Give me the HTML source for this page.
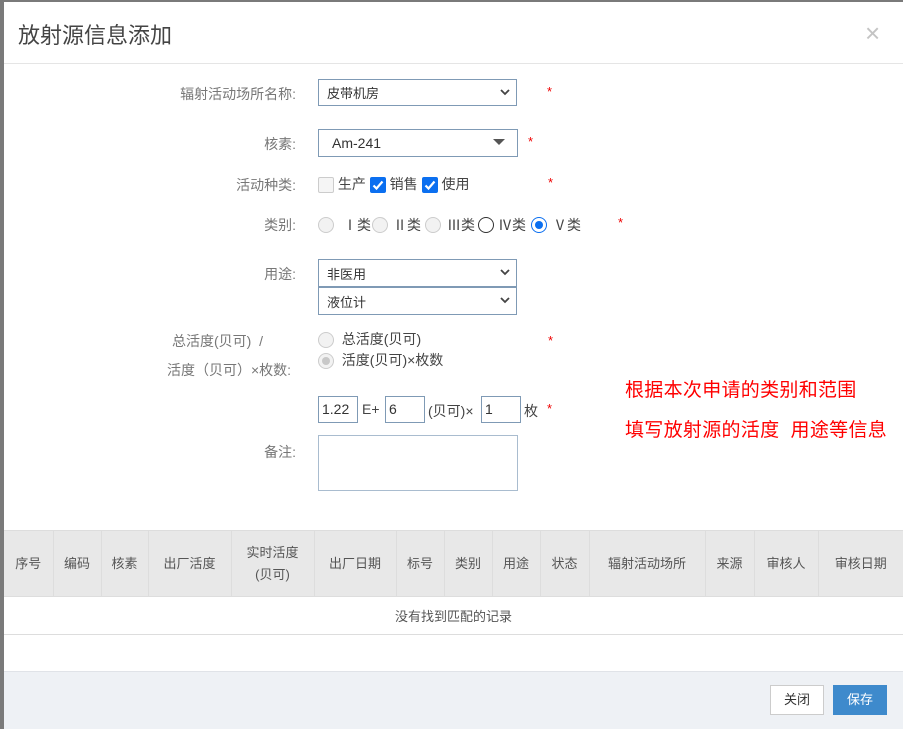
<!DOCTYPE html>
<html><head><meta charset="utf-8">
<style>
*{box-sizing:border-box;margin:0;padding:0}
body{width:903px;height:729px;background:#7a7a7a;font-family:"Liberation Sans","Noto Sans CJK SC",sans-serif;font-size:14px;color:#555;position:relative;overflow:hidden}
.modal{position:absolute;left:4px;top:2px;width:899px;height:727px;background:#fff}
.a{position:absolute;white-space:nowrap}
.lbl{position:absolute;text-align:right;width:200px;color:#777;font-size:14px}
.sel{position:absolute;border:1px solid #7f9ab5;background:#fff;font-size:13px;color:#333;padding-left:8px;display:flex;align-items:center}
.sel svg{position:absolute;right:6px;top:50%;margin-top:-4px}
.star{position:absolute;color:#e00;font-size:13px}
.cb{display:inline-block;width:16px;height:16px;border-radius:2px;vertical-align:middle;position:relative}
.rd{display:inline-block;width:16px;height:16px;border-radius:50%;border:1px solid #ccc;background:#f2f2f2;vertical-align:middle;position:relative}
.rda{position:absolute;width:16px;height:16px;border-radius:50%;border:1px solid #ccc;background:#f2f2f2;top:215px}
.rl{position:absolute;top:213px;color:#444}
.inp{position:absolute;border:1px solid #7f9ab5;height:27px;font-size:14px;color:#333;padding-left:3px;line-height:25px}
table{position:absolute;left:0;top:528px;width:899px;border-collapse:collapse;font-size:13px;color:#555}
th{background:#e8e8e8;font-weight:normal;border-left:1px solid #ddd;height:66px;line-height:22px;border-top:1px solid #ddd;border-bottom:1px solid #ddd}
td{height:38px;text-align:center;border-bottom:1px solid #ddd}
</style></head><body>
<div class="modal">
 <div class="a" style="left:14px;top:16px;font-size:22px;color:#444">放射源信息添加</div>
 <div class="a" style="left:861px;top:16px;font-size:26px;color:#c4c4c4">×</div>
 <div class="a" style="left:0;top:61px;width:899px;height:1px;background:#e5e5e5"></div>

 <div class="lbl" style="left:92px;top:82px">辐射活动场所名称:</div>
 <div class="sel" style="left:314px;top:77px;width:199px;height:27px">皮带机房<svg width="10" height="7" viewBox="0 0 10 7"><path d="M1 1l4 4 4-4" stroke="#444" stroke-width="1.8" fill="none"/></svg></div>
 <div class="star" style="left:543px;top:82px">*</div>

 <div class="lbl" style="left:92px;top:132px">核素:</div>
 <div class="sel" style="left:314px;top:127px;width:200px;height:28px;font-size:14px;padding-left:13px">Am-241<svg width="12" height="7" viewBox="0 0 12 7" style="right:12px"><path d="M0 0h12L6 6z" fill="#555"/></svg></div>
 <div class="star" style="left:524px;top:132px">*</div>

 <div class="lbl" style="left:92px;top:173px">活动种类:</div>
 <div class="a" style="left:314px;top:172px;color:#444">
  <span class="cb" style="border:1px solid #ccc;background:#f5f5f5"></span> 生产
  <span class="cb" style="background:#0b6ff0"><svg width="16" height="16" viewBox="0 0 16 16" style="position:absolute;left:0;top:0"><path d="M3.5 8.5l3 3 6-7" stroke="#fff" stroke-width="2.2" fill="none"/></svg></span> 销售
  <span class="cb" style="background:#0b6ff0"><svg width="16" height="16" viewBox="0 0 16 16" style="position:absolute;left:0;top:0"><path d="M3.5 8.5l3 3 6-7" stroke="#fff" stroke-width="2.2" fill="none"/></svg></span> 使用
 </div>
 <div class="star" style="left:544px;top:173px">*</div>

 <div class="lbl" style="left:92px;top:213px">类别:</div>
 <div class="rda" style="left:314px"></div><div class="rl" style="left:339px">Ⅰ类</div>
 <div class="rda" style="left:368px"></div><div class="rl" style="left:389px">Ⅱ类</div>
 <div class="rda" style="left:421px"></div><div class="rl" style="left:443px">Ⅲ类</div>
 <div class="rda" style="left:474px;border-color:#333;background:#fff"></div><div class="rl" style="left:494px">Ⅳ类</div>
 <div class="rda" style="left:527px;border-color:#0b6ff0;background:#fff"><span style="position:absolute;left:3px;top:3px;width:8px;height:8px;border-radius:50%;background:#0b6ff0"></span></div><div class="rl" style="left:549px">Ⅴ类</div>
 <div class="star" style="left:614px;top:213px">*</div>

 <div class="lbl" style="left:92px;top:262px">用途:</div>
 <div class="sel" style="left:314px;top:257px;width:199px;height:28px">非医用<svg width="10" height="7" viewBox="0 0 10 7"><path d="M1 1l4 4 4-4" stroke="#444" stroke-width="1.8" fill="none"/></svg></div>
 <div class="sel" style="left:314px;top:285px;width:199px;height:28px">液位计<svg width="10" height="7" viewBox="0 0 10 7"><path d="M1 1l4 4 4-4" stroke="#444" stroke-width="1.8" fill="none"/></svg></div>

 <div class="a" style="left:168px;top:329px;color:#777">总活度(贝可) &nbsp;/</div>
 <div class="a" style="left:163px;top:358px;color:#777">活度（贝可）×枚数:</div>
 <div class="a" style="left:314px;top:327px;color:#444"><span class="rd"></span>&nbsp; 总活度(贝可)</div>
 <div class="a" style="left:314px;top:348px;color:#444"><span class="rd"><span style="position:absolute;left:3px;top:3px;width:8px;height:8px;border-radius:50%;background:#c8c8c8"></span></span>&nbsp; 活度(贝可)×枚数</div>
 <div class="star" style="left:544px;top:331px">*</div>

 <div class="inp" style="left:314px;top:394px;width:40px">1.22</div>
 <div class="a" style="left:358px;top:399px;color:#444">E+</div>
 <div class="inp" style="left:381px;top:394px;width:40px">6</div>
 <div class="a" style="left:424px;top:399px;color:#444">(贝可)×</div>
 <div class="inp" style="left:477px;top:394px;width:40px">1</div>
 <div class="a" style="left:520px;top:399px;color:#444">枚</div>
 <div class="star" style="left:543px;top:399px">*</div>

 <div class="a" style="left:621px;top:373px;color:#f00;font-size:19px;letter-spacing:0.3px">根据本次申请的类别和范围</div>
 <div class="a" style="left:621px;top:413px;color:#f00;font-size:19px;letter-spacing:0.3px">填写放射源的活度&nbsp; 用途等信息</div>

 <div class="lbl" style="left:92px;top:440px">备注:</div>
 <div class="a" style="left:314px;top:433px;width:200px;height:56px;border:1px solid #a9bccf"></div>

 <table>
  <tr>
   <th style="width:49px;border-left:none">序号</th><th style="width:48px">编码</th><th style="width:47px">核素</th><th style="width:83px">出厂活度</th><th style="width:83px">实时活度<br>(贝可)</th><th style="width:82px">出厂日期</th><th style="width:48px">标号</th><th style="width:48px">类别</th><th style="width:48px">用途</th><th style="width:49px">状态</th><th style="width:116px">辐射活动场所</th><th style="width:49px">来源</th><th style="width:64px">审核人</th><th>审核日期</th>
  </tr>
  <tr><td colspan="14">没有找到匹配的记录</td></tr>
 </table>

 <div class="a" style="left:0;top:669px;width:899px;height:58px;background:#eef1f5;border-top:1px solid #e0e3e8"></div>
 <div class="a" style="left:766px;top:683px;width:54px;height:30px;border:1px solid #ccc;background:#fff;color:#333;font-size:13px;text-align:center;line-height:28px">关闭</div>
 <div class="a" style="left:829px;top:683px;width:54px;height:30px;background:#3e8acc;color:#fff;font-size:13px;text-align:center;line-height:30px">保存</div>
</div>
</body></html>
